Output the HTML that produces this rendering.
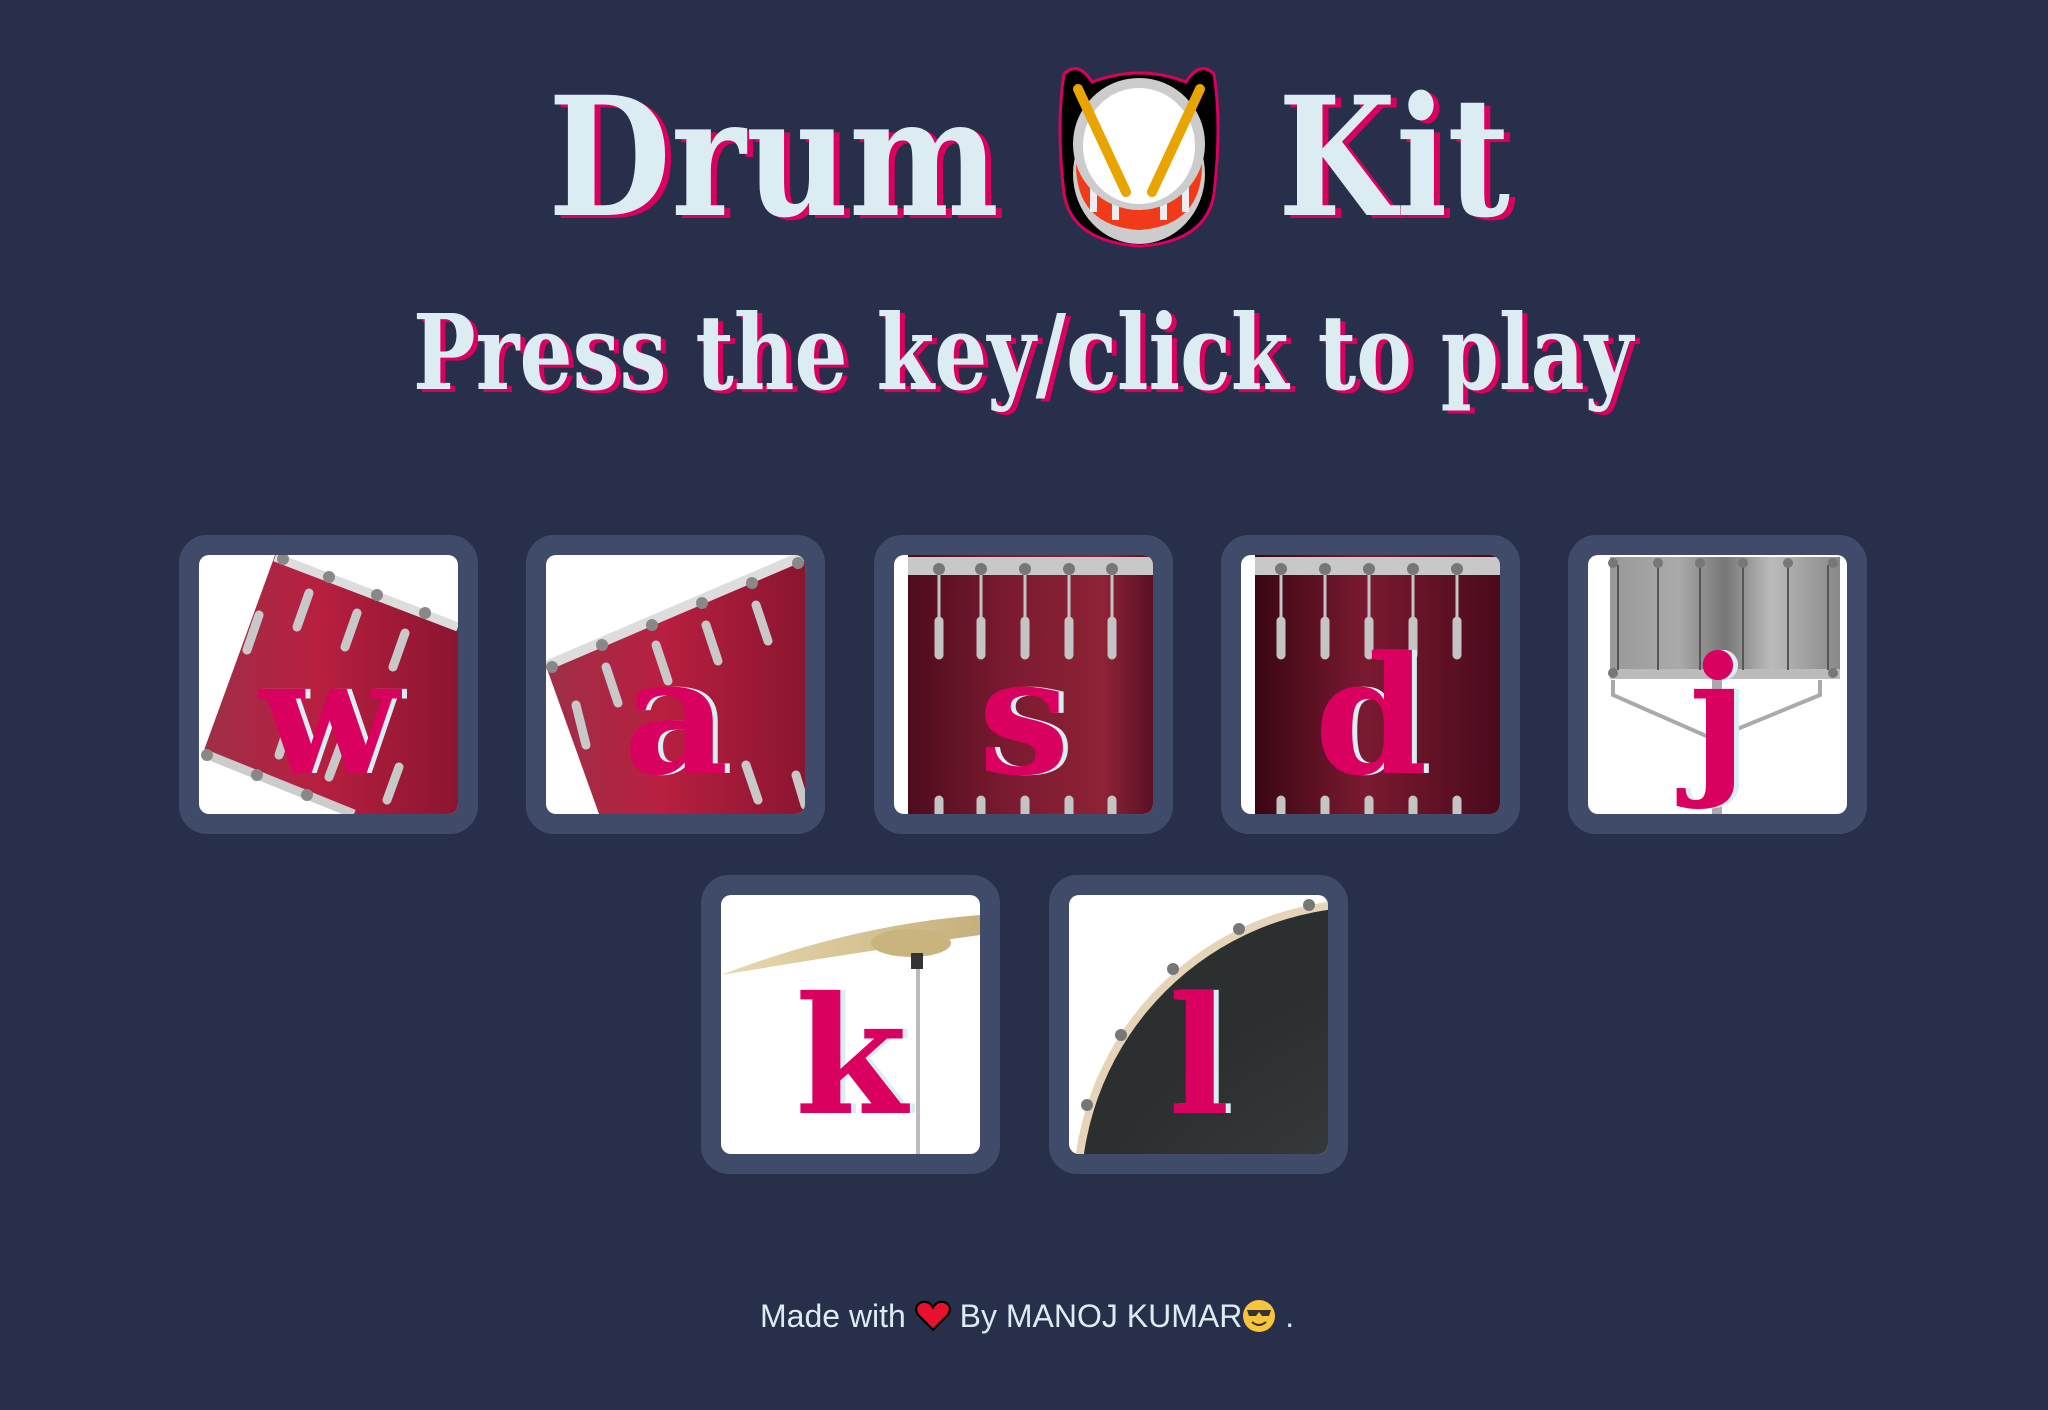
<!DOCTYPE html>
<html><head><meta charset="utf-8"><style>
html,body{margin:0;padding:0;overflow:hidden;width:2048px;height:1410px}
body{background:#282f4a;position:relative;font-family:"Liberation Sans",sans-serif}
.tile{position:absolute;width:259px;height:259px;border:20px solid #404b6a;border-radius:28px;background:#404b6a}
.in{position:absolute;left:0;top:0;width:259px;height:259px;border-radius:10px;overflow:hidden;background:#fff}
.in svg{position:absolute;left:0;top:0}
.ttl{font-family:"DejaVu Serif",serif;font-weight:bold}
.foot{position:absolute;left:760px;top:1298px;font-size:32px;color:#dbecf2;white-space:nowrap}
</style></head><body>

<svg style="position:absolute;left:0;top:0" width="2048" height="420">
<defs>
<linearGradient id="r1" x1="0" x2="1"><stop offset="0" stop-color="#9e2f48"/><stop offset=".45" stop-color="#b81f40"/><stop offset="1" stop-color="#8a1530"/></linearGradient>
<linearGradient id="r2" x1="0" x2="1"><stop offset="0" stop-color="#4d0c1c"/><stop offset=".4" stop-color="#7a1a30"/><stop offset=".8" stop-color="#8e2236"/><stop offset="1" stop-color="#5a1024"/></linearGradient>
<linearGradient id="r3" x1="0" x2="1"><stop offset="0" stop-color="#3a0612"/><stop offset=".45" stop-color="#7a1a30"/><stop offset="1" stop-color="#4a0a1c"/></linearGradient>
<linearGradient id="g1" x1="0" x2="1"><stop offset="0" stop-color="#999"/><stop offset=".3" stop-color="#aaa"/><stop offset=".5" stop-color="#777"/><stop offset=".7" stop-color="#bbb"/><stop offset="1" stop-color="#888"/></linearGradient>
<linearGradient id="c1" x1="0" x2="1"><stop offset="0" stop-color="#e8d9b0"/><stop offset="1" stop-color="#c6b07c"/></linearGradient>
<radialGradient id="d1" cx=".7" cy=".9" r=".8"><stop offset="0" stop-color="#4a4d4d"/><stop offset="1" stop-color="#2c2f2f"/></radialGradient>
</defs>
<g class="ttl" font-size="165">
<text x="554" y="218" textLength="451" lengthAdjust="spacingAndGlyphs" fill="#d9005f">Drum</text>
<text x="548" y="215" textLength="451" lengthAdjust="spacingAndGlyphs" fill="#dbecf2">Drum</text>
<text x="1284" y="218" textLength="232" lengthAdjust="spacingAndGlyphs" fill="#d9005f">Kit</text>
<text x="1278" y="215" textLength="232" lengthAdjust="spacingAndGlyphs" fill="#dbecf2">Kit</text>
</g>
<g class="ttl" font-size="104">
<text x="418" y="392" textLength="1220" lengthAdjust="spacingAndGlyphs" fill="#d9005f">Press the key/click to play</text>
<text x="413" y="389" textLength="1220" lengthAdjust="spacingAndGlyphs" fill="#dbecf2">Press the key/click to play</text>
</g>
</svg>
<svg style="position:absolute;left:1056px;top:64px" width="166" height="184" viewBox="0 0 166 184">
 <path d="M8 10 Q22 -4 36 18 Q84 0 130 18 Q144 -4 158 10 Q166 60 158 130 Q150 178 84 182 Q16 178 8 130 Q0 60 8 10Z" fill="#000" stroke="#d9005f" stroke-width="3"/>
 <ellipse cx="83" cy="110" rx="66" ry="70" fill="#ccc"/>
 <path d="M20 100 Q20 162 83 166 Q146 162 146 100Z" fill="#f03a1a"/>
 <rect x="34" y="120" width="7" height="28" fill="#eee"/><rect x="56" y="126" width="7" height="30" fill="#eee"/><rect x="104" y="126" width="7" height="30" fill="#eee"/><rect x="126" y="120" width="7" height="28" fill="#eee"/>
 <ellipse cx="83" cy="80" rx="66" ry="66" fill="#ccc"/>
 <ellipse cx="83" cy="82" rx="56" ry="58" fill="#fff"/>
 <path d="M22 25 L70 128 M144 25 L96 128" stroke="#e8a400" stroke-width="10" stroke-linecap="round"/>
</svg>

<!-- w -->
<div class="tile" style="left:179px;top:535px"><div class="in">
<svg width="259" height="259">
<polygon points="76,0 259,72 259,259 155,259 4,198" fill="url(#r1)"/>
<path d="M76,2 L259,72" stroke="#ddd" stroke-width="9"/><path d="M4,198 L155,259" stroke="#ccc" stroke-width="9"/>
<g stroke="#c8c8c8" stroke-width="9" stroke-linecap="round"><path d="M110 38 L98 72"/><path d="M158 58 L146 92"/><path d="M206 78 L194 112"/><path d="M80 200 L90 170"/><path d="M130 222 L142 190"/><path d="M188 245 L200 212"/><path d="M60 60 L48 95"/></g>
<g fill="#888"><circle cx="84" cy="4" r="6"/><circle cx="130" cy="22" r="6"/><circle cx="178" cy="40" r="6"/><circle cx="226" cy="58" r="6"/><circle cx="8" cy="200" r="6"/><circle cx="58" cy="220" r="6"/><circle cx="108" cy="240" r="6"/></g>
<g class="ttl" font-size="162" text-anchor="middle"><text x="135" y="218" fill="#dbecf2">w</text><text x="130" y="218" fill="#d9005f">w</text></g></svg>
</div></div>

<!-- a -->
<div class="tile" style="left:526px;top:535px"><div class="in">
<svg width="259" height="259"><polygon points="0,111 259,0 259,259 53,259" fill="url(#r1)"/>
<path d="M0,111 L259,0" stroke="#ddd" stroke-width="10"/>
<g stroke="#c8c8c8" stroke-width="9" stroke-linecap="round"><path d="M60 112 L72 148"/><path d="M110 90 L122 126"/><path d="M160 70 L172 106"/><path d="M210 50 L222 86"/><path d="M30 150 L40 190"/><path d="M200 210 L212 245"/><path d="M250 220 L259 250"/></g>
<g fill="#888"><circle cx="6" cy="112" r="6"/><circle cx="56" cy="90" r="6"/><circle cx="106" cy="70" r="6"/><circle cx="156" cy="48" r="6"/><circle cx="206" cy="28" r="6"/><circle cx="252" cy="8" r="6"/></g>
<g class="ttl" font-size="162" text-anchor="middle"><text x="135" y="218" fill="#dbecf2">a</text><text x="130" y="218" fill="#d9005f">a</text></g></svg>
</div></div>

<!-- s -->
<div class="tile" style="left:874px;top:535px"><div class="in">
<svg width="259" height="259">
<rect x="14" y="0" width="245" height="259" fill="url(#r2)"/><rect x="14" y="2" width="245" height="18" fill="#c8c8c8"/>
<g stroke="#c4c4c4" stroke-linecap="round"><g stroke-width="3"><path d="M45 20V70M87 20V70M131 20V70M175 20V70M218 20V70"/></g><g stroke-width="9"><path d="M45 66V100M87 66V100M131 66V100M175 66V100M218 66V100M45 245V259M87 245V259M131 245V259M175 245V259M218 245V259"/></g></g>
<g fill="#777"><circle cx="45" cy="14" r="6"/><circle cx="87" cy="14" r="6"/><circle cx="131" cy="14" r="6"/><circle cx="175" cy="14" r="6"/><circle cx="218" cy="14" r="6"/></g>
<g class="ttl" font-size="162" text-anchor="middle"><text x="135" y="218" fill="#dbecf2">s</text><text x="130" y="218" fill="#d9005f">s</text></g></svg>
</div></div>

<!-- d -->
<div class="tile" style="left:1221px;top:535px"><div class="in">
<svg width="259" height="259">
<rect x="14" y="0" width="245" height="259" fill="url(#r3)"/><rect x="14" y="2" width="245" height="18" fill="#c8c8c8"/>
<g stroke="#c4c4c4" stroke-linecap="round"><g stroke-width="3"><path d="M40 20V70M84 20V70M128 20V70M172 20V70M216 20V70"/></g><g stroke-width="9"><path d="M40 66V100M84 66V100M128 66V100M172 66V100M216 66V100M40 245V259M84 245V259M128 245V259M172 245V259M216 245V259"/></g></g>
<g fill="#777"><circle cx="40" cy="14" r="6"/><circle cx="84" cy="14" r="6"/><circle cx="128" cy="14" r="6"/><circle cx="172" cy="14" r="6"/><circle cx="216" cy="14" r="6"/></g>
<g class="ttl" font-size="162" text-anchor="middle"><text x="135" y="218" fill="#dbecf2">d</text><text x="130" y="218" fill="#d9005f">d</text></g></svg>
</div></div>

<!-- j -->
<div class="tile" style="left:1568px;top:535px"><div class="in">
<svg width="259" height="259">
<rect x="22" y="2" width="230" height="118" fill="url(#g1)"/><rect x="22" y="114" width="230" height="10" fill="#bbb"/>
<g stroke="#555" stroke-width="2"><path d="M30 10V115M70 10V115M112 10V115M155 10V115M200 10V115M240 10V115"/></g>
<path d="M25 125 L25 140 L125 184 L232 140 L232 125" stroke="#aaa" stroke-width="4" fill="none"/><rect x="124" y="124" width="10" height="135" fill="#aaa"/>
<g fill="#777"><circle cx="25" cy="8" r="5"/><circle cx="70" cy="8" r="5"/><circle cx="112" cy="8" r="5"/><circle cx="155" cy="8" r="5"/><circle cx="200" cy="8" r="5"/><circle cx="245" cy="8" r="5"/><circle cx="25" cy="118" r="5"/><circle cx="245" cy="118" r="5"/></g>
<g class="ttl" font-size="162" text-anchor="middle"><text x="135" y="218" fill="#dbecf2">j</text><text x="130" y="218" fill="#d9005f">j</text></g></svg>
</div></div>

<!-- k -->
<div class="tile" style="left:701px;top:875px"><div class="in">
<svg width="259" height="259">
<rect x="195" y="60" width="4" height="199" fill="#bbb"/>
<path d="M0 80 Q130 30 259 20 L259 40 Q150 55 0 80Z" fill="url(#c1)"/><ellipse cx="190" cy="48" rx="40" ry="14" fill="#c9b47e"/>
<rect x="190" y="58" width="12" height="16" fill="#333"/>
<g class="ttl" font-size="162" text-anchor="middle"><text x="135" y="218" fill="#dbecf2">k</text><text x="130" y="218" fill="#d9005f">k</text></g></svg>
</div></div>

<!-- l -->
<div class="tile" style="left:1049px;top:875px"><div class="in">
<svg width="259" height="259">
<circle cx="300" cy="300" r="296" fill="#e6d4b8"/><circle cx="300" cy="300" r="288" fill="url(#d1)"/>
<g fill="#777"><circle cx="240" cy="10" r="6"/><circle cx="170" cy="34" r="6"/><circle cx="104" cy="74" r="6"/><circle cx="52" cy="140" r="6"/><circle cx="18" cy="210" r="6"/></g>
<g class="ttl" font-size="162" text-anchor="middle"><text x="135" y="218" fill="#dbecf2">l</text><text x="130" y="218" fill="#d9005f">l</text></g></svg>
</div></div>

<div class="foot">Made with <svg width="36" height="32" viewBox="0 0 34 30" style="vertical-align:-5px"><path d="M17 28 L3 14 Q-2 6 6 2 Q13 0 17 7 Q21 0 28 2 Q36 6 31 14Z" fill="#e8112d" stroke="#000" stroke-width="2"/></svg> By MANOJ KUMAR<svg width="34" height="34" viewBox="0 0 34 34" style="vertical-align:-6px"><circle cx="17" cy="17" r="16" fill="#f8c43a"/><path d="M5 11 H29 L27 17 H20 L17 13 L14 17 H7Z" fill="#333"/><path d="M10 23 Q17 29 24 23" stroke="#333" stroke-width="2" fill="none"/></svg> .</div>
</body></html>
